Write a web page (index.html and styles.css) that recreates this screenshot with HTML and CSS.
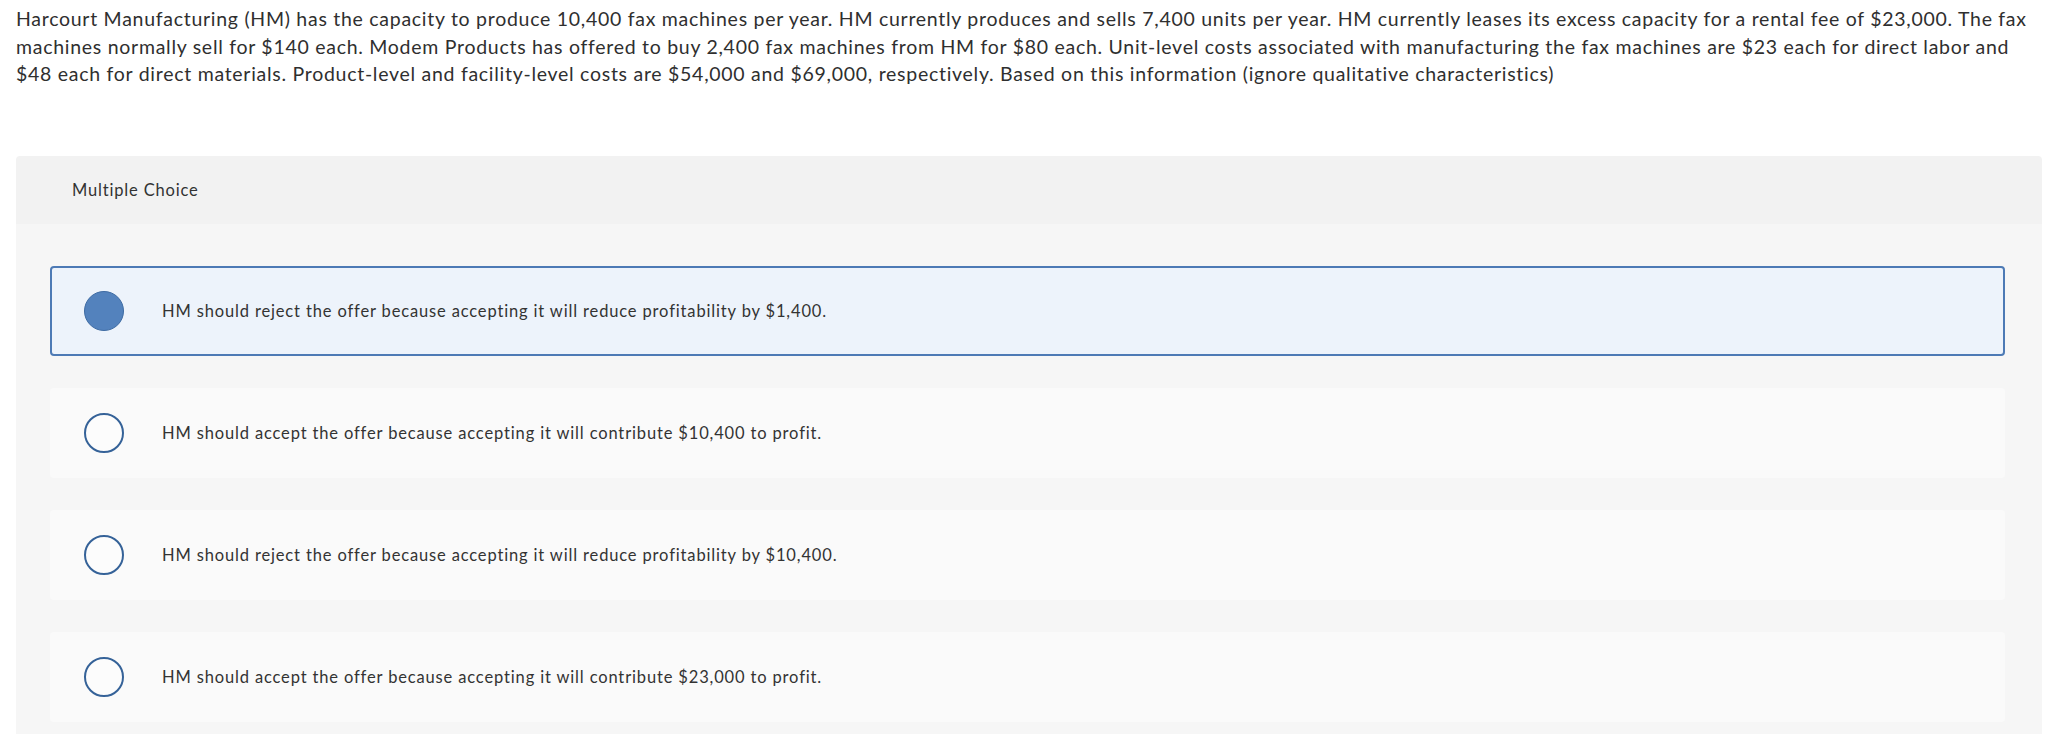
FILE: index.html
```html
<!DOCTYPE html>
<html lang="en">
<head>
<meta charset="utf-8">
<title>Multiple Choice</title>
<link rel="stylesheet" href="styles.css">
</head>
<body>
<div class="page">
  <p class="question">Harcourt Manufacturing (HM) has the capacity to produce 10,400 fax machines per year. HM currently produces and sells 7,400 units per year. HM currently leases its excess capacity for a rental fee of $23,000. The fax machines normally sell for $140 each. Modem Products has offered to buy 2,400 fax machines from HM for $80 each. Unit-level costs associated with manufacturing the fax machines are $23 each for direct labor and $48 each for direct materials. Product-level and facility-level costs are $54,000 and $69,000, respectively. Based on this information (ignore qualitative characteristics)</p>
  <section class="panel">
    <div class="panel-header">Multiple Choice</div>
    <div class="panel-body">
      <div class="option selected">
        <span class="radio"></span>
        <span class="option-text">HM should reject the offer because accepting it will reduce profitability by $1,400.</span>
      </div>
      <div class="option">
        <span class="radio"></span>
        <span class="option-text">HM should accept the offer because accepting it will contribute $10,400 to profit.</span>
      </div>
      <div class="option">
        <span class="radio"></span>
        <span class="option-text">HM should reject the offer because accepting it will reduce profitability by $10,400.</span>
      </div>
      <div class="option">
        <span class="radio"></span>
        <span class="option-text">HM should accept the offer because accepting it will contribute $23,000 to profit.</span>
      </div>
    </div>
  </section>
</div>
</body>
</html>
```
FILE: styles.css
```css
html, body {
  margin: 0;
  padding: 0;
  background: #ffffff;
}

body {
  font-family: "Lato", "Open Sans", sans-serif;
  color: #333333;
  overflow: hidden;
}

.page {
  padding: 5px 10px 0 16px;
}

.question {
  margin: 0;
  font-size: 19.5px;
  line-height: 27.5px;
  letter-spacing: 0.72px;
  color: #2f2f2f;
}

.panel {
  margin-top: 68.5px;
  border-radius: 4px 4px 0 0;
  overflow: hidden;
}

.panel-header {
  height: 68px;
  display: flex;
  align-items: center;
  padding-left: 56px;
  background: #f2f2f2;
  font-size: 16.5px;
  letter-spacing: 0.83px;
  color: #333333;
}

.panel-body {
  background: #f6f6f6;
  padding: 42px 37px 40px 34px;
  display: flex;
  flex-direction: column;
  gap: 32px;
}

.option {
  box-sizing: border-box;
  height: 90px;
  display: flex;
  align-items: center;
  gap: 38px;
  padding-left: 34px;
  background: #fafafa;
  border-radius: 4px;
}

.option.selected {
  background: #edf3fb;
  border: 2px solid #4d7ab5;
  padding-left: 32px;
}

.radio {
  box-sizing: border-box;
  flex: none;
  width: 40px;
  height: 40px;
  border-radius: 50%;
  border: 2px solid #356298;
  background: #fcfcfc;
}

.option.selected .radio {
  background: #5382bd;
  border: 1.5px solid #3e6ba3;
}

.option-text {
  font-size: 16.5px;
  letter-spacing: 0.85px;
  color: #333333;
}
```
